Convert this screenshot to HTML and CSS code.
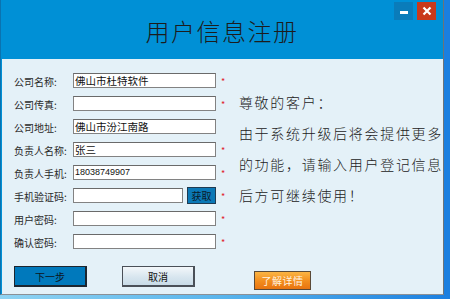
FILE: index.html
```html
<!DOCTYPE html>
<html lang="zh-CN">
<head>
    <meta charset="UTF-8">
    <meta name="viewport" content="width=device-width, initial-scale=1.0">
    <title>用户信息注册</title>
    <link rel="stylesheet" href="styles.css">
</head>
<body>
    <div class="window">
        <!-- 标题栏 -->
        <div class="titlebar">
            <span></span>
            <h1 class="title">用户信息注册</h1>
            <div class="controls">
                <span class="btn-min"><i></i></span>
                <span class="btn-close">
                    <svg width="10" height="10" viewBox="0 0 10 10"><path d="M1.5 1.5 L8.5 8.5 M8.5 1.5 L1.5 8.5" stroke="#fff" stroke-width="2.2"/></svg>
                </span>
            </div>
        </div>

        <div class="panel">
            <div class="content">
                <!-- 注册表单 -->
                <div class="form">
                    <div class="row">
                        <label>公司名称:</label>
                        <input class="field" type="text" value="佛山市杜特软件">
                        <span class="star">*</span>
                    </div>
                    <div class="row">
                        <label>公司传真:</label>
                        <input class="field" type="text">
                        <span class="star">*</span>
                    </div>
                    <div class="row">
                        <label>公司地址:</label>
                        <input class="field" type="text" value="佛山市汾江南路">
                        <span></span>
                    </div>
                    <div class="row">
                        <label>负责人名称:</label>
                        <input class="field" type="text" value="张三">
                        <span class="star">*</span>
                    </div>
                    <div class="row">
                        <label>负责人手机:</label>
                        <input class="field phone" type="text" value="18038749907">
                        <span class="star">*</span>
                    </div>
                    <div class="row">
                        <label>手机验证码:</label>
                        <div class="code-box">
                            <input class="field code" type="text">
                            <button class="btn-get">获取</button>
                        </div>
                        <span class="star">*</span>
                    </div>
                    <div class="row">
                        <label>用户密码:</label>
                        <input class="field" type="password">
                        <span class="star">*</span>
                    </div>
                    <div class="row">
                        <label>确认密码:</label>
                        <input class="field" type="password">
                        <span class="star">*</span>
                    </div>
                </div>

                <!-- 提示信息 -->
                <div class="notice">
                    <p>尊敬的客户：</p>
                    <p>由于系统升级后将会提供更多</p>
                    <p>的功能，请输入用户登记信息</p>
                    <p>后方可继续使用！</p>
                </div>
            </div>

            <div class="actions">
                <button class="btn btn-next">下一步</button>
                <button class="btn btn-cancel">取消</button>
                <button class="btn btn-more">了解详情</button>
            </div>
        </div>
    </div>
</body>
</html>
```

FILE: styles.css
```css
body {
    margin: 0;
    padding: 0;
    width: 450px;
    height: 299px;
    overflow: hidden;
    font-family: "Noto Sans CJK SC", "Liberation Sans", sans-serif;
    background: linear-gradient(to right, #8fd3f2, #58b4ec 50%, #1b7fe0);
}
.window {
    width: 444px;
    height: 295px;
    background-color: #0090d6;
    border-right: 1px solid #6d7378;
    border-bottom: 1px solid #8a9096;
    border-left: 1px solid #0a73b0;
    box-sizing: border-box;
    display: flex;
    flex-direction: column;
    box-shadow: 6px 0 0 #1b7fe0;
}
.titlebar {
    height: 59px;
    display: grid;
    grid-template-columns: 1fr auto 1fr;
}
.title {
    margin: 0;
    padding-top: 15px;
    font-size: 24px;
    font-weight: 300;
    letter-spacing: 1.5px;
    color: #1c1c1c;
    line-height: 32px;
}
.controls {
    justify-self: end;
    display: flex;
    gap: 4px;
    padding: 2px 7px 0 0;
    height: 18px;
}
.btn-min, .btn-close {
    width: 19px;
    height: 18px;
    display: flex;
    align-items: center;
    justify-content: center;
}
.btn-min {
    background-color: #0a7cba;
}
.btn-min i {
    display: block;
    width: 8px;
    height: 3px;
    margin-top: 3px;
    background: #fff;
}
.btn-close {
    background-color: #c9391b;
}
.panel {
    flex: 1;
    background-color: #e4f1f8;
    margin-left: 1px;
    display: flex;
    flex-direction: column;
}
.content {
    display: flex;
}
.form {
    width: 225px;
    padding: 12px 0 0 12px;
    box-sizing: border-box;
    display: flex;
    flex-direction: column;
    gap: 8px;
}
.row {
    display: grid;
    grid-template-columns: 59px 143px auto;
    align-items: center;
    height: 15px;
}
.row label {
    font-size: 10px;
    color: #2a2a2a;
    white-space: nowrap;
    padding-top: 3px;
}
.field {
    width: 143px;
    height: 15px;
    box-sizing: border-box;
    border: 1px solid #828282;
    border-top-color: #6a6a6a;
    background: #fff;
    padding: 0 1px;
    font-family: "Noto Sans CJK SC", "Liberation Sans", sans-serif;
    font-size: 10.5px;
    line-height: 13px;
    color: #111;
    outline: none;
}
.field.phone {
    font-family: "Liberation Sans", sans-serif;
    font-size: 9px;
}
.code-box {
    display: flex;
    align-items: center;
    gap: 4px;
}
.field.code {
    width: 110px;
}
.btn-get {
    width: 29px;
    height: 17px;
    padding: 0;
    border: 1px solid #1f3b52;
    background-color: #0b78b6;
    color: #0a1a28;
    font-family: "Noto Sans CJK SC", sans-serif;
    font-size: 10px;
    line-height: 15px;
}
.star {
    color: #e0202a;
    font-size: 9px;
    padding-left: 5px;
    padding-top: 2px;
}
.notice {
    padding: 28px 0 0 12px;
}
.notice p {
    margin: 0;
    font-size: 14px;
    font-weight: 300;
    line-height: 31px;
    letter-spacing: 1.7px;
    color: #222;
    white-space: nowrap;
}
.actions {
    display: flex;
    align-items: flex-start;
    padding: 19px 0 0 12px;
}
.btn {
    padding: 0;
    font-family: "Noto Sans CJK SC", sans-serif;
    font-size: 10px;
    cursor: pointer;
}
.btn-next {
    width: 73px;
    height: 21px;
    border: 1px solid #1c2630;
    border-width: 1px 2px 2px 1px;
    background-color: #0079bc;
    color: #0d1620;
}
.btn-cancel {
    width: 73px;
    height: 21px;
    margin-left: 35px;
    border: 1px solid #4a5058;
    border-width: 1px 2px 2px 1px;
    background: linear-gradient(#f3f7fa, #d8e6ef 55%, #c8dbe7);
    color: #111;
}
.btn-more {
    width: 57px;
    height: 19px;
    margin: 5px 0 0 59px;
    border: 1px solid #5a4a38;
    background: linear-gradient(#fbb544, #f28c1c 55%, #e87410);
    color: #fff3e0;
    letter-spacing: 0.5px;
}
```
